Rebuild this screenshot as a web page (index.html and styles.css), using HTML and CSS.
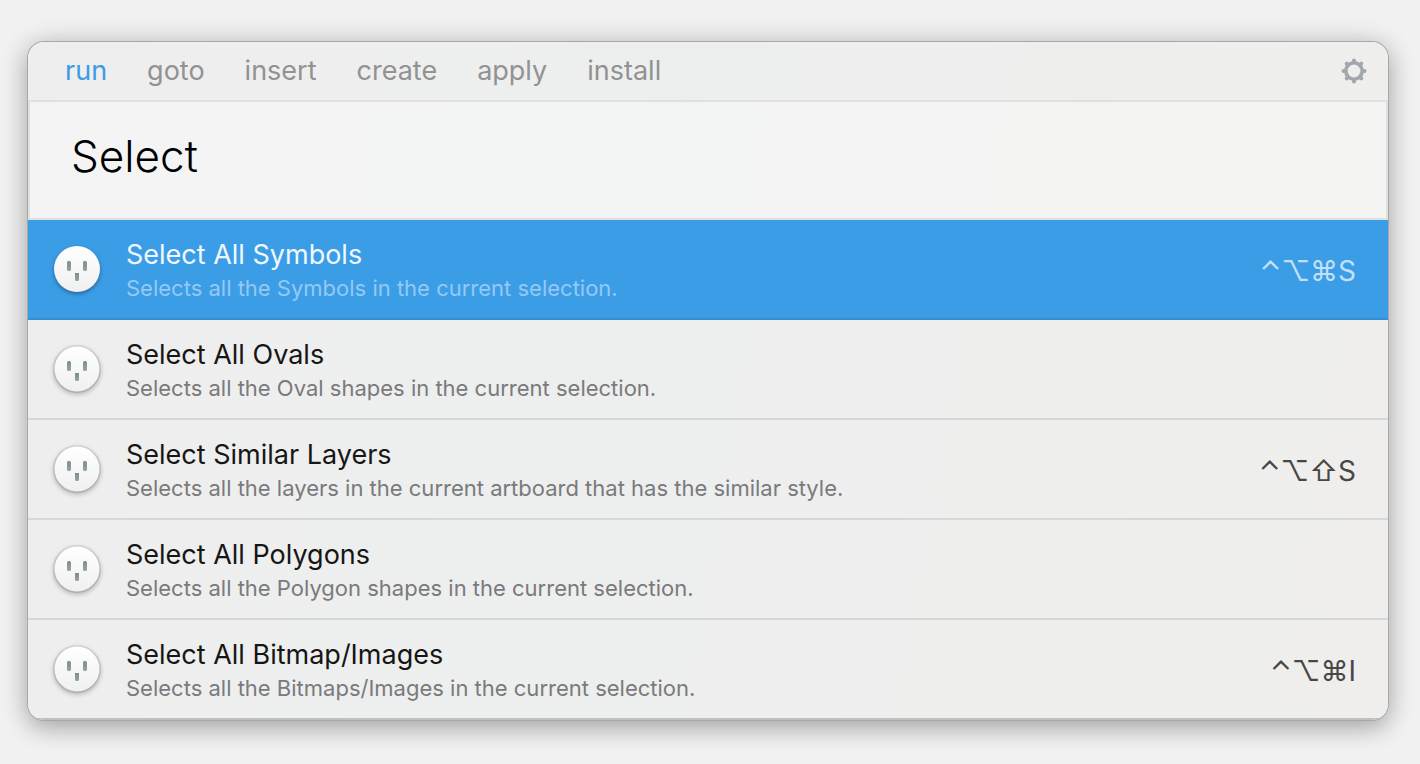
FILE: index.html
```
<!DOCTYPE html>
<html lang="en">
<head>
<meta charset="utf-8">
<title>Runner</title>
<link rel="stylesheet" href="styles.css">
</head>
<body>
<svg class="defs" aria-hidden="true">
  <defs>
    <linearGradient id="face" x1="0" y1="0" x2="0" y2="1"><stop offset="0" stop-color="#ffffff"/><stop offset="1" stop-color="#f0f0f0"/></linearGradient>
    <linearGradient id="rim" x1="0" y1="0" x2="0" y2="1"><stop offset="0" stop-color="#d2d2d6"/><stop offset="1" stop-color="#aeaeb2"/></linearGradient>
    <linearGradient id="slot" x1="0" y1="0" x2="0" y2="1"><stop offset="0" stop-color="#7f8c8d"/><stop offset="1" stop-color="#95a5a6"/></linearGradient>
    <symbol id="outlet" viewBox="0 0 48 48">
      <circle cx="24" cy="24" r="23" fill="url(#face)"/>
      <rect x="14" y="16" width="4" height="10" rx="1.5" fill="url(#slot)"/>
      <rect x="30" y="16" width="4" height="10" rx="1.5" fill="url(#slot)"/>
      <path d="M22 28h4v6.500a1.500 1.500 0 0 1-1.500 1.500h-1a1.500 1.500 0 0 1-1.500-1.500z" fill="url(#slot)"/>
    </symbol>
    <symbol id="outlet-rim" viewBox="0 0 48 48">
      <circle cx="24" cy="24" r="23.2" fill="none" stroke="url(#rim)" stroke-width="1.600"/>
    </symbol>
  </defs>
</svg>
<main class="panel">
  <header class="bar">
    <nav class="tabs">
      <a class="tab active" href="#run">run</a>
      <a class="tab" href="#goto">goto</a>
      <a class="tab" href="#insert">insert</a>
      <a class="tab" href="#create">create</a>
      <a class="tab" href="#apply">apply</a>
      <a class="tab" href="#install">install</a>
    </nav>
    <button class="settings" type="button" aria-label="Settings">
      <svg class="gear" viewBox="0 0 26 26" aria-hidden="true">
        <circle cx="13" cy="13" r="8.200" fill="none" stroke="currentColor" stroke-width="3.600"/>
        <g fill="none" stroke="currentColor" stroke-width="4" stroke-linecap="round">
          <path d="M13 4V2.500M13 22v1.500M4 13H2.500M22 13h1.500M6.500 6.500l-.8-.8M19.500 6.500l.8-.8M6.500 19.500l-.8.8M19.500 19.500l.8.8"/>
        </g>
      </svg>
    </button>
  </header>
  <div class="search">
    <input class="query" type="text" value="Select" aria-label="Command">
  </div>
  <ul class="results">
    <li class="row selected">
      <svg class="outlet" aria-hidden="true"><use href="#outlet"/></svg>
      <div class="text"><div class="name">Select All Symbols</div><div class="about">Selects all the Symbols in the current selection.</div></div>
      <kbd class="keys">⌃⌥⌘S</kbd>
    </li>
    <li class="row">
      <svg class="outlet" aria-hidden="true"><use href="#outlet"/><use href="#outlet-rim"/></svg>
      <div class="text"><div class="name">Select All Ovals</div><div class="about">Selects all the Oval shapes in the current selection.</div></div>
    </li>
    <li class="row">
      <svg class="outlet" aria-hidden="true"><use href="#outlet"/><use href="#outlet-rim"/></svg>
      <div class="text"><div class="name">Select Similar Layers</div><div class="about">Selects all the layers in the current artboard that has the similar style.</div></div>
      <kbd class="keys">⌃⌥⇧S</kbd>
    </li>
    <li class="row">
      <svg class="outlet" aria-hidden="true"><use href="#outlet"/><use href="#outlet-rim"/></svg>
      <div class="text"><div class="name">Select All Polygons</div><div class="about">Selects all the Polygon shapes in the current selection.</div></div>
    </li>
    <li class="row">
      <svg class="outlet" aria-hidden="true"><use href="#outlet"/><use href="#outlet-rim"/></svg>
      <div class="text"><div class="name">Select All Bitmap/Images</div><div class="about">Selects all the Bitmaps/Images in the current selection.</div></div>
      <kbd class="keys">⌃⌥⌘I</kbd>
    </li>
  </ul>
</main>
</body>
</html>
```
FILE: styles.css
```
* { box-sizing: border-box; }
body {
  margin: 0;
  padding: 42px 32px 44px 28px;
  background: #f1f1f1;
  font-family: Inter, "Liberation Sans", sans-serif;
}
.defs { position: absolute; width: 0; height: 0; }
.panel {
  border-radius: 16px;
  overflow: hidden;
  background: linear-gradient(100deg, #eeeeee, #edefee 45%, #efeeec);
  box-shadow: 0 0 0 1px #a8a8a8, 0 8px 24px rgba(0, 0, 0, .26), 0 0 30px rgba(0, 0, 0, .12);
}
.bar {
  display: flex;
  align-items: center;
  justify-content: space-between;
  height: 60px;
  padding: 0 21px 0 37px;
  border-bottom: 2px solid #e0e0e0;
}
.tabs { display: flex; gap: 40px; }
.tab {
  color: #929292;
  font-size: 27px;
  line-height: 40px;
  text-decoration: none;
}
.tab.active { color: #3b9be6; }
.settings { display: flex; padding: 0; border: 0; background: none; color: #a3a6ac; }
.gear { width: 26px; height: 26px; }
.search {
  border: 2px solid #e0e0e0;
  border-top: 0;
  background: rgba(255, 255, 255, .35);
}
.query {
  display: block;
  width: 100%;
  height: 116px;
  padding: 0 41px 8px;
  border: 0;
  outline: 0;
  background: none;
  color: #000;
  font: 300 44px Inter, "Liberation Sans", sans-serif;
}
.results { margin: 0; padding: 0; list-style: none; }
.row {
  display: flex;
  align-items: center;
  height: 100px;
  padding: 0 32px 0 25px;
  border-bottom: 2px solid #d6d7d7;
}
.row:last-child { border-color: #bfc1c1; }
.outlet {
  flex: none;
  width: 48px;
  height: 48px;
  overflow: visible;
  filter: drop-shadow(0 2px 2px rgba(0, 0, 0, .2));
}
.text { flex: 1; margin-left: 25px; padding-top: 2px; }
.name { color: #161616; font-size: 27px; line-height: 35px; }
.about { color: #7a7a7c; font-size: 22px; line-height: 32px; }
.keys { padding-top: 4px; color: #474747; font: 28px Inter, "DejaVu Sans", sans-serif; }
.selected { background: #3c9de7; border-color: #368dd0; }
.selected .outlet { filter: drop-shadow(0 2px 2px rgba(0, 0, 0, .35)); }
.selected .name { color: #f0f8ff; }
.selected .about { color: #93c9f3; }
.selected .keys { color: #c2e0f8; }
```
